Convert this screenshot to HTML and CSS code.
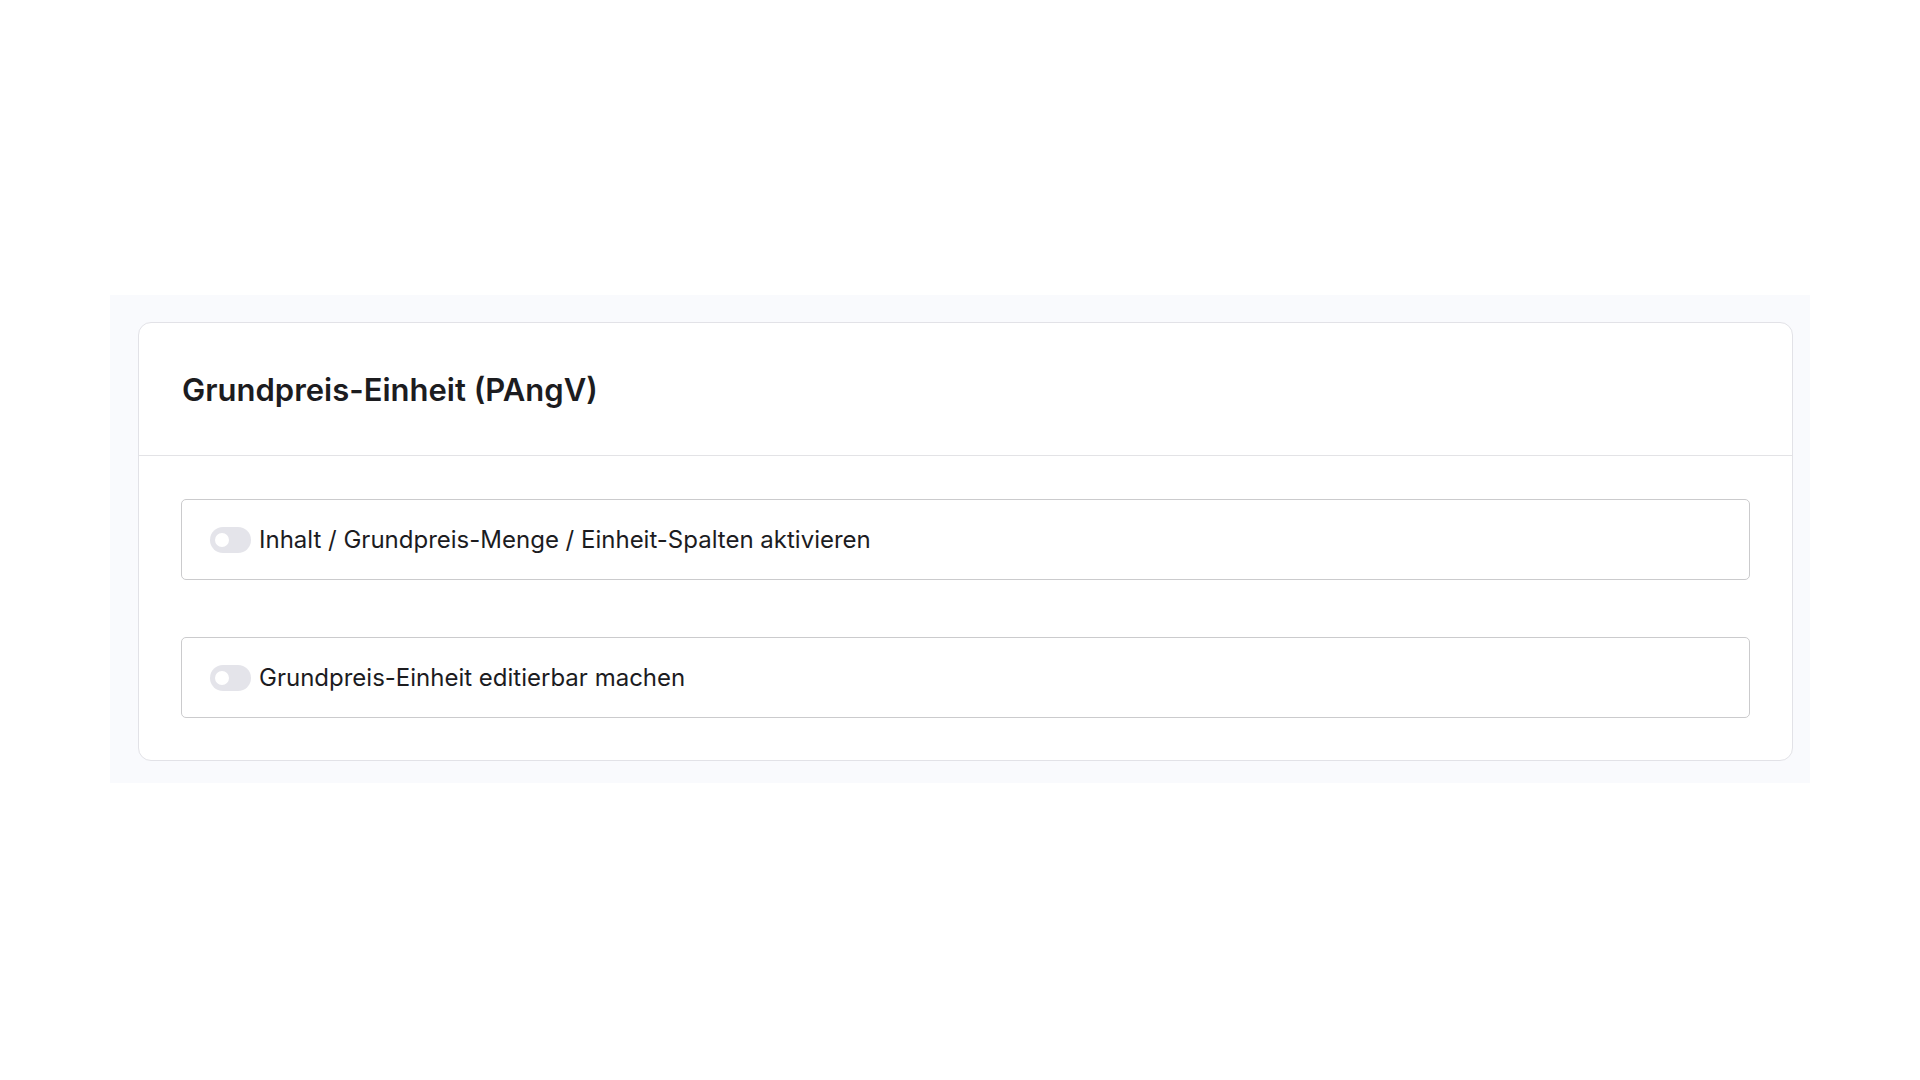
FILE: index.html
```html
<!DOCTYPE html>
<html lang="de">
<head>
<meta charset="utf-8">
<title>Grundpreis-Einheit (PAngV)</title>
<link rel="stylesheet" href="styles.css">
</head>
<body>
  <main class="page">
    <section class="panel">
      <div class="card">
        <header class="card-header">
          <h2 class="card-title">Grundpreis-Einheit (PAngV)</h2>
        </header>
        <div class="card-body">
          <label class="option">
            <span class="toggle"><span class="toggle-knob"></span></span>
            <span class="option-label">Inhalt / Grundpreis-Menge / Einheit-Spalten aktivieren</span>
          </label>
          <label class="option">
            <span class="toggle"><span class="toggle-knob"></span></span>
            <span class="option-label">Grundpreis-Einheit editierbar machen</span>
          </label>
        </div>
      </div>
    </section>
  </main>
</body>
</html>
```

FILE: styles.css
```css
* {
  box-sizing: border-box;
}

html, body {
  margin: 0;
  padding: 0;
  background: #ffffff;
}

body {
  font-family: Inter, "Noto Sans", "Liberation Sans", sans-serif;
  color: #1c1c1f;
}

.page {
  padding-top: 295px;
  padding-left: 110px;
}

.panel {
  width: 1700px;
  background: #f9fafd;
  padding: 27px 17px 22px 28px;
}

.card {
  background: #ffffff;
  border: 1px solid #e2e2e7;
  border-radius: 13px;
}

.card-header {
  height: 133px;
  display: flex;
  align-items: center;
  padding: 0 43px;
  border-bottom: 1px solid #e3e3e6;
}

.card-title {
  margin: 0;
  font-size: 31px;
  font-weight: 600;
  letter-spacing: 0;
  color: #1c1c1f;
}

.card-body {
  padding: 43px 42px 42px;
  display: flex;
  flex-direction: column;
  gap: 57px;
}

.option {
  display: flex;
  align-items: center;
  gap: 8px;
  height: 81px;
  padding: 0 28px;
  border: 1px solid #cbcbcd;
  border-radius: 5px;
  background: #ffffff;
}

.toggle {
  position: relative;
  flex: none;
  width: 41px;
  height: 26px;
  border-radius: 13px;
  background: #e4e4ea;
}

.toggle-knob {
  position: absolute;
  left: 5px;
  top: 6px;
  width: 14px;
  height: 14px;
  border-radius: 50%;
  background: #ffffff;
}

.option-label {
  font-size: 24px;
  font-weight: 400;
  color: #1c1c1f;
}
```
